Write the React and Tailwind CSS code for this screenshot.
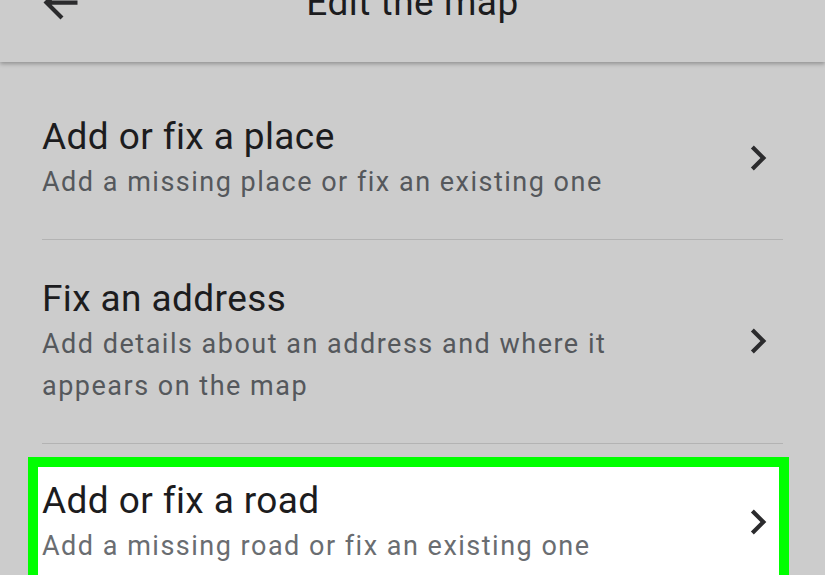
import { useState } from 'react'

const items = [
  { title: 'Add or fix a place', sub: 'Add a missing place or fix an existing one' },
  { title: 'Fix an address', sub: 'Add details about an address and where it appears on the map' },
]

function Chevron() {
  return (
    <svg viewBox="0 0 24 24" className="h-[50px] w-[50px] shrink-0 fill-[#2b2b2d]">
      <path d="M10 6L8.59 7.41 13.17 12l-4.58 4.59L10 18l6-6z" />
    </svg>
  )
}

function BackArrow() {
  return (
    <svg viewBox="0 0 24 24" className="h-[51px] w-[51px] fill-[#2b2b2d]">
      <path d="M20 11H7.83l5.59-5.59L12 4l-8 8 8 8 1.41-1.41L7.83 13H20v-2z" />
    </svg>
  )
}

function Row({ title, sub, highlight }) {
  return (
    <div className="flex items-center">
      <div className="flex-1">
        <div className="text-[37px] leading-[48px] tracking-[0.4px] text-[#1c1c1e]">{title}</div>
        <div
          className={
            'max-w-[600px] text-[27px] leading-[42px] tracking-[1.5px] ' +
            (highlight ? 'text-[#6a6d71]' : 'text-[#55585c]')
          }
        >
          {sub}
        </div>
      </div>
      <div className={highlight ? '-mr-[4px]' : 'mr-[42px]'}>
        <Chevron />
      </div>
    </div>
  )
}

export default function App() {
  const [active] = useState(2)

  return (
    <div className="h-[575px] w-[825px] overflow-hidden bg-[#cccccc] font-['Roboto',sans-serif]">
      <header className="relative z-10 flex h-[62px] flex-col bg-[#cccccc] shadow-[0_2px_4px_rgba(0,0,0,0.28)]">
        <div className="-mt-[23px] grid grid-cols-[1fr_auto_1fr] items-start">
          <div className="pl-[35px]">
            <BackArrow />
          </div>
          <div className="mt-[2px] text-[37px] leading-[48px] tracking-[0.5px] text-[#1c1c1e]">Edit the map</div>
          <div />
        </div>
      </header>

      <div className="pt-[51px]">
        {items.map((it) => (
          <div key={it.title}>
            <div className="pl-[42px] pb-[36px]">
              <Row {...it} />
            </div>
            <div className="mx-[42px] mb-[35px] h-px bg-[#b3b3b3]" />
          </div>
        ))}

        <div className="-mt-[22px] ml-[28px] mr-[36px] border-[10px] border-[#00ff00] bg-white pt-[10px] pb-[20px]">
          <div className="pl-[4px]">
            <Row
              title="Add or fix a road"
              sub="Add a missing road or fix an existing one"
              highlight={active === 2}
            />
          </div>
        </div>
      </div>
    </div>
  )
}
